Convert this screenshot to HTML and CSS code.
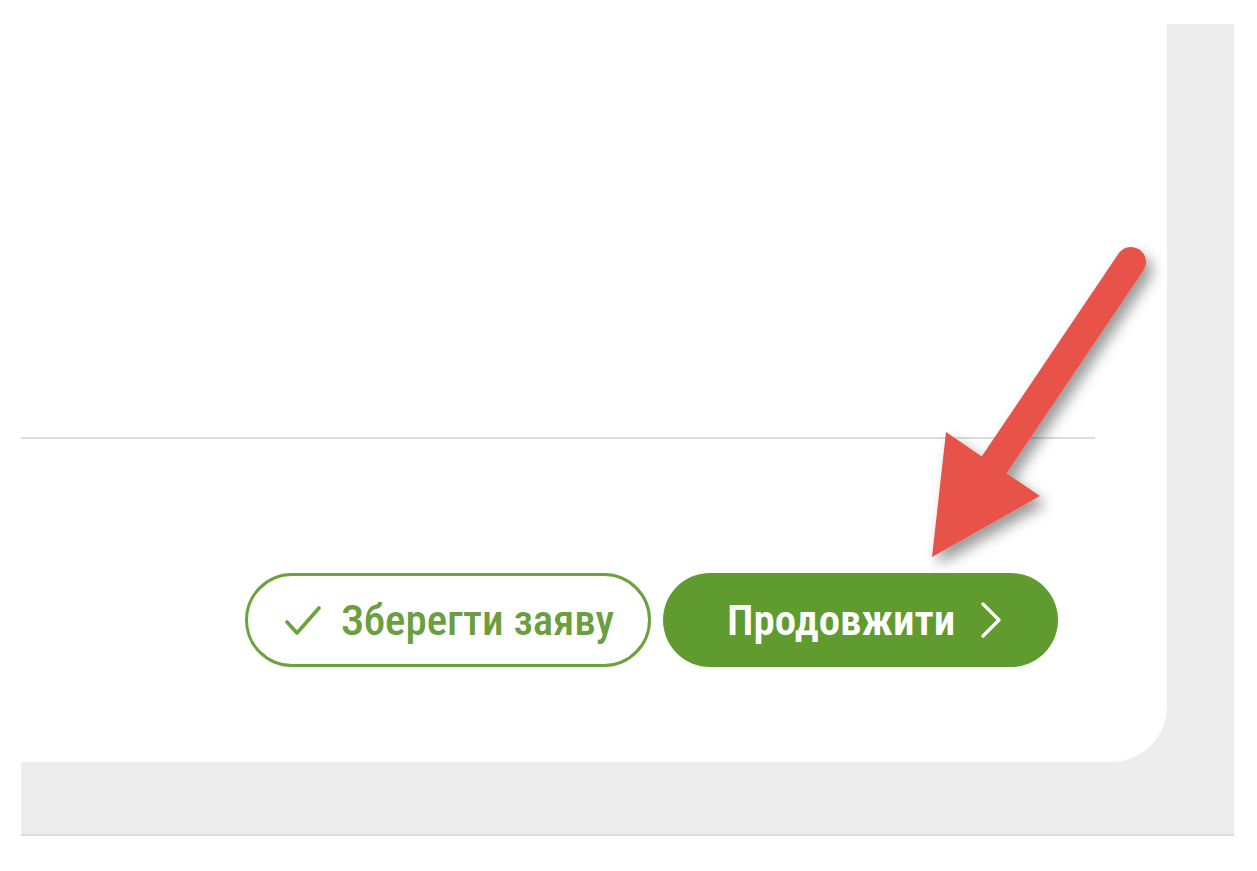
FILE: index.html
```html
<!DOCTYPE html>
<html lang="uk">
<head>
<meta charset="utf-8">
<title>Заява</title>
<link rel="stylesheet" href="styles.css">
</head>
<body>
<div class="frame">
  <div class="card">
    <div class="divider"></div>
    <div class="actions">
      <button class="btn btn-outline">
        <svg class="ico-check" viewBox="0 0 36 30" width="36" height="30"><path d="M2 17 L12 28 L34 3" fill="none" stroke="#6aa33b" stroke-width="3.6" stroke-linecap="round" stroke-linejoin="round"/></svg>
        <span class="label">Зберегти заяву</span>
      </button>
      <button class="btn btn-fill">
        <span class="label">Продовжити</span>
        <svg class="ico-chev" viewBox="0 0 22 36" width="22" height="36"><path d="M3 2 L19 18 L3 34" fill="none" stroke="#ffffff" stroke-width="3.2" stroke-linecap="round" stroke-linejoin="round"/></svg>
      </button>
    </div>
  </div>
</div>
<svg class="annot" viewBox="0 0 1257 871" width="1257" height="871">
  <defs>
    <filter id="sh" x="-20%" y="-20%" width="140%" height="140%">
      <feDropShadow dx="6" dy="8" stdDeviation="7" flood-color="#000" flood-opacity="0.4"/>
    </filter>
  </defs>
  <g filter="url(#sh)" fill="#e8534a">
    <path d="M1131 262 L988 474" stroke="#e8534a" stroke-width="30" stroke-linecap="round"/>
    <polygon points="946,432 1040,496 932,557"/>
  </g>
</svg>
</body>
</html>
```

FILE: styles.css
```css
html, body {
  margin: 0;
  padding: 0;
  background: #ffffff;
}
body {
  width: 1257px;
  height: 871px;
  position: relative;
  overflow: hidden;
  font-family: "Roboto", "Liberation Sans", sans-serif;
}
.frame {
  margin: 24px 0 0 21px;
  width: 1213px;
  height: 810px;
  background: #ededed;
  border-bottom: 2px solid #dcdcdc;
}
.card {
  width: 1146px;
  height: 738px;
  background: #ffffff;
  border-bottom-right-radius: 56px;
  padding-top: 413px;
  box-sizing: border-box;
  display: flex;
  flex-direction: column;
}
.divider {
  width: 1074px;
  height: 2px;
  background: #dcdcdc;
}
.actions {
  margin-top: 134px;
  margin-right: 109px;
  display: flex;
  justify-content: flex-end;
  gap: 12px;
}
.btn {
  height: 94px;
  border-radius: 47px;
  box-sizing: border-box;
  display: flex;
  align-items: center;
  font-family: inherit;
  font-size: 43px;
  font-stretch: 75%;
  padding: 0;
  cursor: pointer;
}
.btn-outline {
  width: 406px;
  background: #ffffff;
  border: 3px solid #6aa33b;
  color: #6a9e3f;
  font-weight: 500;
  padding-left: 37px;
  gap: 20px;
}
.btn-fill {
  width: 395px;
  background: #5f9b2f;
  border: none;
  color: #ffffff;
  font-weight: 600;
  padding-left: 64px;
  gap: 25px;
}
.label {
  white-space: nowrap;
  line-height: 1;
}
.ico-check, .ico-chev {
  flex: none;
  display: block;
}
.annot {
  position: absolute;
  left: 0;
  top: 0;
  pointer-events: none;
}
```
